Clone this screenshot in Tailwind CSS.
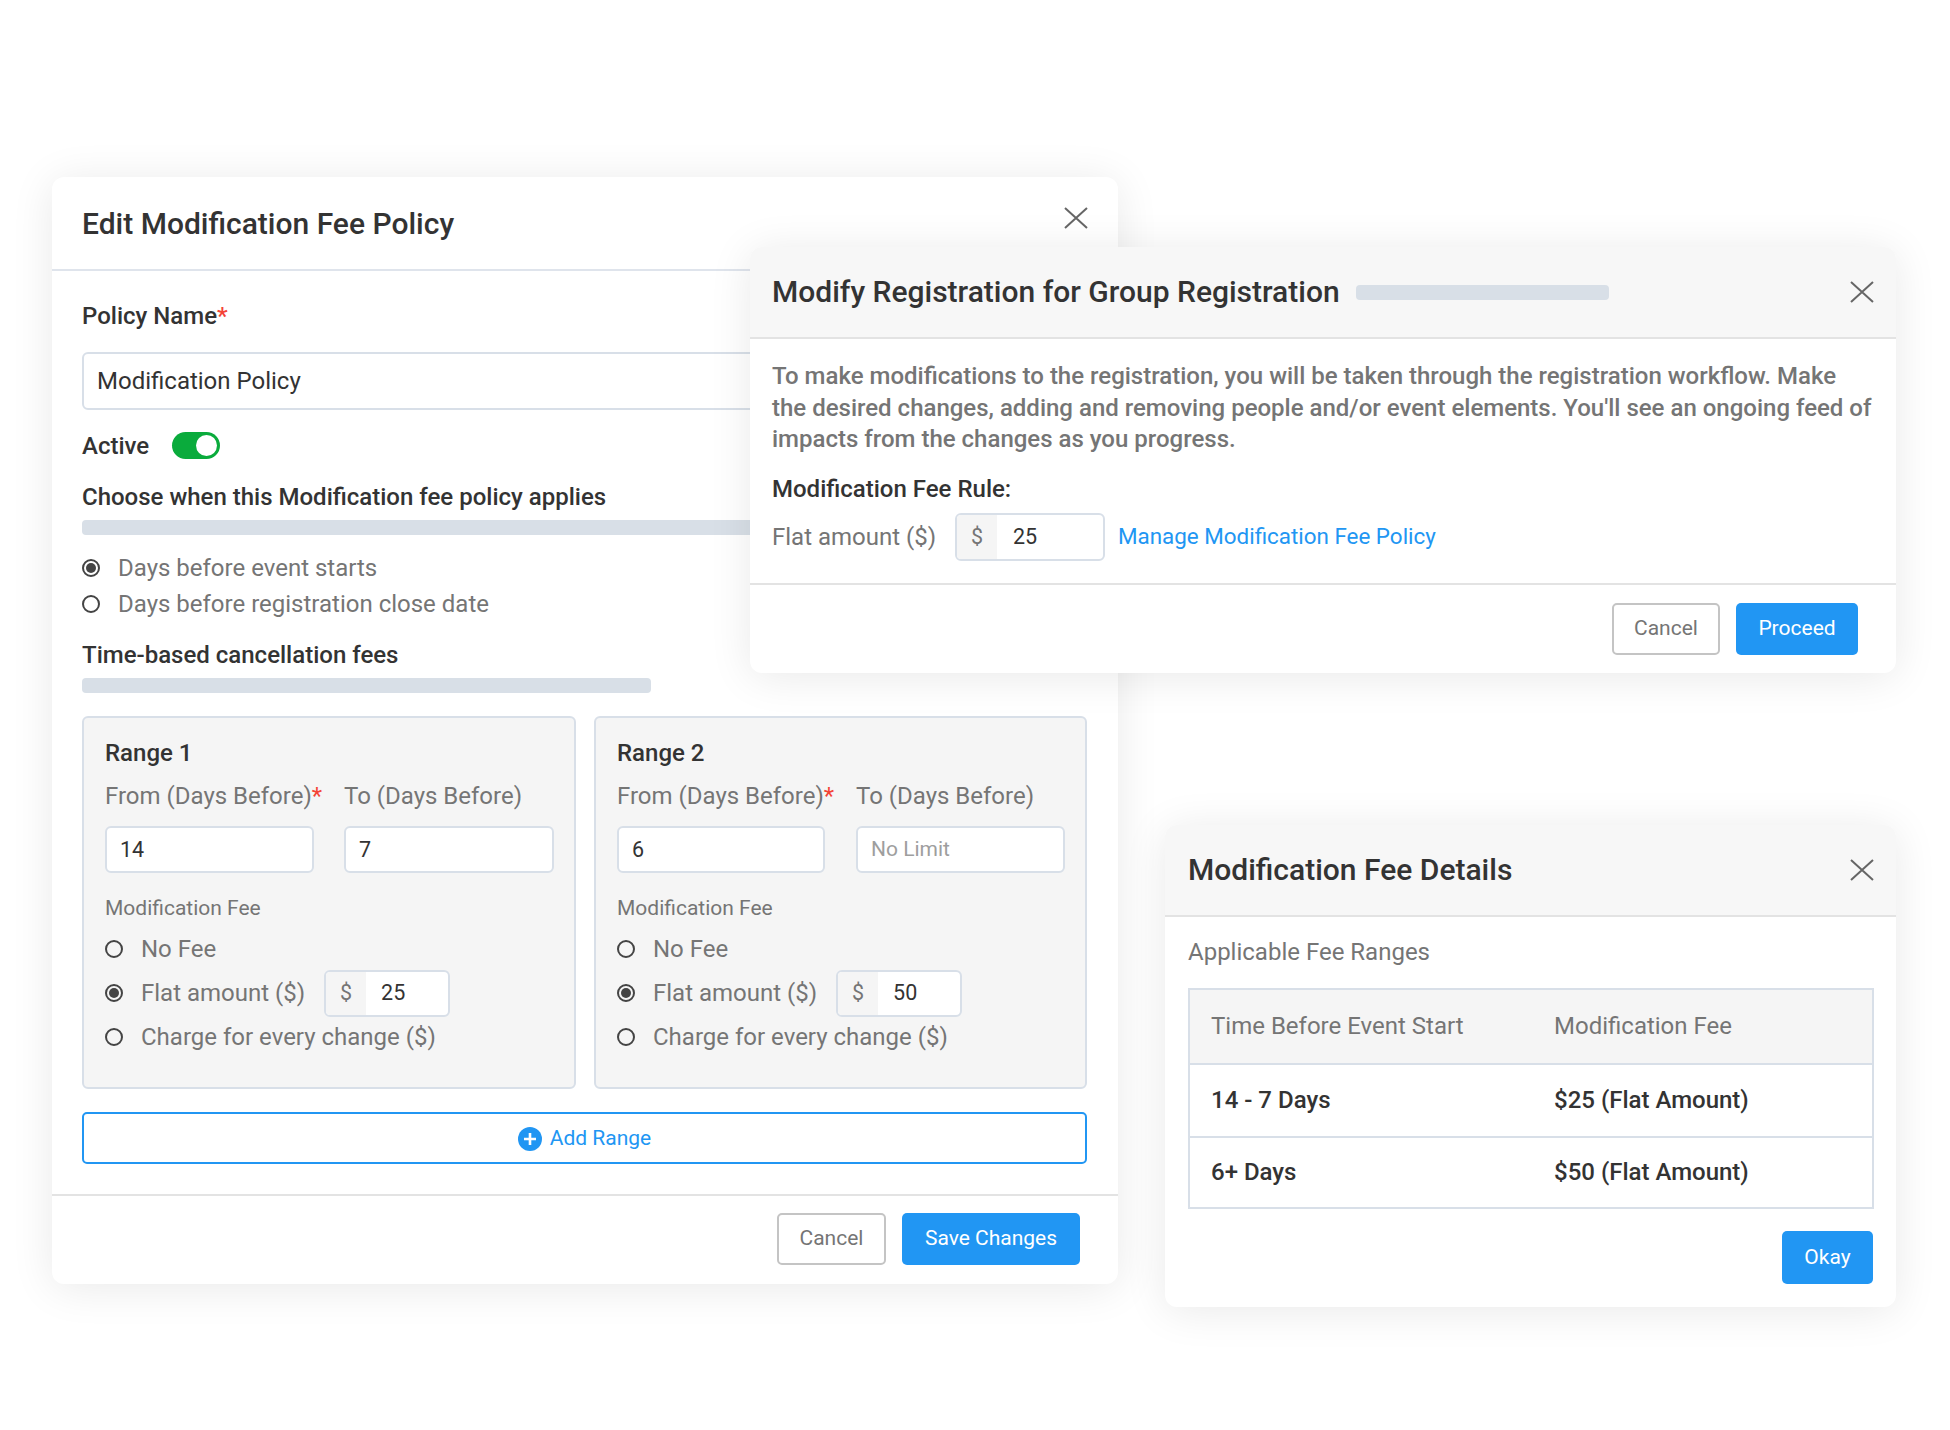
<!DOCTYPE html>
<html lang="en">
<head>
<meta charset="utf-8">
<title>Modification Fee Policy</title>
<script src="https://cdn.jsdelivr.net/npm/@tailwindcss/browser@4"></script>
</head>
<body class="bg-white">
<div class="relative w-[1950px] h-[1430px] overflow-hidden bg-white font-['Roboto',sans-serif] text-[24px] text-[#333]">

  <!-- Edit policy window -->
  <section class="absolute left-[52px] top-[177px] w-[1066px] h-[1107px] bg-white rounded-[12px] shadow-[0_4px_44px_rgba(0,0,0,0.09)] flex flex-col">
    <header class="h-[94px] shrink-0 border-b-2 border-[#dfe4ec] pl-[30px] pr-[29px] flex items-center justify-between">
      <h2 class="text-[30px] font-medium leading-none mt-[2px]">Edit Modification Fee Policy</h2>
      <svg class="w-[24px] h-[22px] -mt-[10px] mr-[1px]" viewBox="0 0 24 22" fill="none" stroke="#666" stroke-width="2"><path d="M1 1L23 21M23 1L1 21"/></svg>
    </header>
    <div class="pl-[30px] pr-[31px] flex flex-col">
      <div class="mt-[30px] h-[30px] leading-[30px] font-medium">Policy Name<span class="text-[#f44336]">*</span></div>
      <div class="mt-[21px] h-[58px] border-2 border-[#d8dfe8] rounded-[6px] pl-[13px] flex items-center">Modification Policy</div>
      <div class="mt-[22px] h-[27px] flex items-center gap-[23px]">
        <span class="font-medium">Active</span>
        <span class="w-[48px] h-[27px] rounded-full bg-[#0aab3c] flex items-center justify-end pr-[3px]"><span class="w-[21px] h-[21px] rounded-full bg-white"></span></span>
      </div>
      <div class="mt-[23px] h-[30px] leading-[30px] font-medium">Choose when this Modification fee policy applies</div>
      <div class="mt-[8px] h-[15px] w-[800px] rounded-[4px] bg-[#d8dfe7]"></div>
      <div class="mt-[18px] h-[30px] flex items-center gap-[18px] text-[#757575]">
        <span class="w-[18px] h-[18px] rounded-full border-2 border-[#444] flex items-center justify-center"><span class="w-[10px] h-[10px] rounded-full bg-[#444]"></span></span>
        Days before event starts
      </div>
      <div class="mt-[6px] h-[30px] flex items-center gap-[18px] text-[#757575]">
        <span class="w-[18px] h-[18px] rounded-full border-2 border-[#444]"></span>
        Days before registration close date
      </div>
      <div class="mt-[21px] h-[30px] leading-[30px] font-medium">Time-based cancellation fees</div>
      <div class="mt-[8px] h-[15px] w-[569px] rounded-[4px] bg-[#d8dfe7]"></div>

      <div class="mt-[23px] h-[373px] grid grid-cols-[494px_493px] gap-[18px]">
        <!-- Range 1 -->
        <div class="border-2 border-[#d8dfe8] rounded-[6px] bg-[#f5f5f5] pl-[21px] pr-[20px] pt-[20px]">
          <div class="h-[30px] leading-[30px] font-medium">Range 1</div>
          <div class="mt-[13px] grid grid-cols-[209px_209px] gap-x-[30px] text-[#757575]">
            <div class="h-[30px] leading-[30px] whitespace-nowrap">From (Days Before)<span class="text-[#f44336]">*</span></div>
            <div class="h-[30px] leading-[30px] whitespace-nowrap">To (Days Before)</div>
          </div>
          <div class="mt-[15px] grid grid-cols-[209px_210px] gap-x-[30px] text-[21.5px]">
            <div class="h-[47px] bg-white border-2 border-[#d8dfe8] rounded-[6px] pl-[13px] pt-[1px] flex items-center">14</div>
            <div class="h-[47px] bg-white border-2 border-[#d8dfe8] rounded-[6px] pl-[13px] pt-[1px] flex items-center">7</div>
          </div>
          <div class="mt-[22px] h-[26px] leading-[26px] text-[21px] text-[#757575]">Modification Fee</div>
          <div class="mt-[6px] flex flex-col text-[#757575]">
            <div class="h-[44px] flex items-center gap-[18px]"><span class="w-[18px] h-[18px] rounded-full border-2 border-[#444]"></span>No Fee</div>
            <div class="h-[44px] flex items-center gap-[18px]">
              <span class="w-[18px] h-[18px] rounded-full border-2 border-[#444] flex items-center justify-center"><span class="w-[10px] h-[10px] rounded-full bg-[#444]"></span></span>
              <span>Flat amount ($)</span>
              <span class="ml-[1px] w-[126px] h-[47px] border-2 border-[#d8dfe8] rounded-[6px] bg-white flex items-center overflow-hidden text-[21.5px]"><span class="w-[40px] h-full bg-[#f5f5f5] flex items-center justify-center">$</span><span class="pl-[15px] text-[#333]">25</span></span>
            </div>
            <div class="h-[44px] flex items-center gap-[18px]"><span class="w-[18px] h-[18px] rounded-full border-2 border-[#444]"></span>Charge for every change ($)</div>
          </div>
        </div>
        <!-- Range 2 -->
        <div class="border-2 border-[#d8dfe8] rounded-[6px] bg-[#f5f5f5] pl-[21px] pr-[20px] pt-[20px]">
          <div class="h-[30px] leading-[30px] font-medium">Range 2</div>
          <div class="mt-[13px] grid grid-cols-[208px_209px] gap-x-[31px] text-[#757575]">
            <div class="h-[30px] leading-[30px] whitespace-nowrap">From (Days Before)<span class="text-[#f44336]">*</span></div>
            <div class="h-[30px] leading-[30px] whitespace-nowrap">To (Days Before)</div>
          </div>
          <div class="mt-[15px] grid grid-cols-[208px_209px] gap-x-[31px] text-[21.5px]">
            <div class="h-[47px] bg-white border-2 border-[#d8dfe8] rounded-[6px] pl-[13px] pt-[1px] flex items-center">6</div>
            <div class="h-[47px] bg-white border-2 border-[#d8dfe8] rounded-[6px] pl-[13px] pt-[1px] flex items-center text-[21px] text-[#9e9e9e]">No Limit</div>
          </div>
          <div class="mt-[22px] h-[26px] leading-[26px] text-[21px] text-[#757575]">Modification Fee</div>
          <div class="mt-[6px] flex flex-col text-[#757575]">
            <div class="h-[44px] flex items-center gap-[18px]"><span class="w-[18px] h-[18px] rounded-full border-2 border-[#444]"></span>No Fee</div>
            <div class="h-[44px] flex items-center gap-[18px]">
              <span class="w-[18px] h-[18px] rounded-full border-2 border-[#444] flex items-center justify-center"><span class="w-[10px] h-[10px] rounded-full bg-[#444]"></span></span>
              <span>Flat amount ($)</span>
              <span class="ml-[1px] w-[126px] h-[47px] border-2 border-[#d8dfe8] rounded-[6px] bg-white flex items-center overflow-hidden text-[21.5px]"><span class="w-[40px] h-full bg-[#f5f5f5] flex items-center justify-center">$</span><span class="pl-[15px] text-[#333]">50</span></span>
            </div>
            <div class="h-[44px] flex items-center gap-[18px]"><span class="w-[18px] h-[18px] rounded-full border-2 border-[#444]"></span>Charge for every change ($)</div>
          </div>
        </div>
      </div>

      <div class="mt-[23px] h-[52px] border-2 border-[#2196f3] rounded-[5px] pt-[1px] flex items-center justify-center gap-[8px] text-[21px] text-[#2196f3]">
        <svg class="w-[24px] h-[24px]" viewBox="0 0 24 24"><circle cx="12" cy="12" r="12" fill="#2196f3"/><path d="M12 6v12M6 12h12" stroke="#fff" stroke-width="2.6"/></svg>
        Add Range
      </div>
    </div>
    <footer class="mt-[30px] flex-1 border-t-2 border-[#e3e3e3] pr-[38px] pb-[2px] flex items-center justify-end gap-[16px] text-[21px]">
      <div class="w-[109px] h-[52px] rounded-[5px] border-2 border-[#c4c4c4] text-[#757575] flex items-center justify-center">Cancel</div>
      <div class="w-[178px] h-[52px] rounded-[5px] bg-[#2196f3] text-white flex items-center justify-center">Save Changes</div>
    </footer>
  </section>

  <!-- Modify registration window -->
  <section class="absolute left-[750px] top-[247px] w-[1146px] h-[426px] bg-white rounded-[12px] shadow-[0_4px_44px_rgba(0,0,0,0.09)] flex flex-col overflow-hidden">
    <header class="h-[92px] shrink-0 bg-[#f7f7f7] border-b-2 border-[#e3e3e3] pl-[22px] pr-[22px] flex items-center">
      <h2 class="text-[30px] font-medium leading-none">Modify Registration for Group Registration</h2>
      <span class="ml-[16px] w-[253px] h-[15px] rounded-[4px] bg-[#d8dfe7]"></span>
      <svg class="ml-auto w-[24px] h-[22px]" viewBox="0 0 24 22" fill="none" stroke="#666" stroke-width="2"><path d="M1 1L23 21M23 1L1 21"/></svg>
    </header>
    <div class="h-[244px] shrink-0 pl-[22px] pr-[22px] pt-[22px] flex flex-col">
      <p class="text-[#757575] text-[24px] font-medium leading-[31.6px]">To make modifications to the registration, you will be taken through the registration workflow. Make the desired changes, adding and removing people and/or event elements. You'll see an ongoing feed of impacts from the changes as you progress.</p>
      <div class="mt-[18px] h-[30px] leading-[30px] font-medium">Modification Fee Rule:</div>
      <div class="mt-[9px] h-[48px] flex items-center">
        <span class="w-[183px] text-[#757575]">Flat amount ($)</span>
        <span class="w-[150px] h-[48px] border-2 border-[#d8dfe8] rounded-[6px] bg-white flex items-center overflow-hidden text-[21.5px]"><span class="w-[40px] h-full bg-[#f5f5f5] text-[#757575] flex items-center justify-center">$</span><span class="pl-[16px]">25</span></span>
        <span class="ml-[13px] text-[22.4px] text-[#2196f3]">Manage Modification Fee Policy</span>
      </div>
    </div>
    <footer class="flex-1 border-t-2 border-[#e3e3e3] pr-[38px] pb-[1px] flex items-center justify-end gap-[16px] text-[21px]">
      <div class="w-[108px] h-[52px] rounded-[5px] border-2 border-[#c4c4c4] text-[#757575] flex items-center justify-center">Cancel</div>
      <div class="w-[122px] h-[52px] rounded-[5px] bg-[#2196f3] text-white flex items-center justify-center">Proceed</div>
    </footer>
  </section>

  <!-- Fee details window -->
  <section class="absolute left-[1165px] top-[825px] w-[731px] h-[482px] bg-white rounded-[12px] shadow-[0_4px_44px_rgba(0,0,0,0.09)] flex flex-col overflow-hidden">
    <header class="h-[92px] shrink-0 bg-[#f7f7f7] border-b-2 border-[#e3e3e3] pl-[23px] pr-[22px] flex items-center justify-between">
      <h2 class="text-[30px] font-medium leading-none">Modification Fee Details</h2>
      <svg class="w-[24px] h-[22px]" viewBox="0 0 24 22" fill="none" stroke="#666" stroke-width="2"><path d="M1 1L23 21M23 1L1 21"/></svg>
    </header>
    <div class="pl-[23px] pr-[22px] flex flex-col">
      <div class="mt-[20px] h-[30px] leading-[30px] text-[#757575]">Applicable Fee Ranges</div>
      <div class="mt-[21px] h-[221px] border-2 border-[#d8dfe8] flex flex-col">
        <div class="h-[75px] bg-[#f5f5f5] border-b-2 border-[#d8dfe8] grid grid-cols-[343px_1fr] pl-[21px] pb-[1px] items-center text-[#757575]"><span>Time Before Event Start</span><span>Modification Fee</span></div>
        <div class="h-[73px] border-b-2 border-[#d8dfe8] grid grid-cols-[343px_1fr] pl-[21px] pb-[2px] items-center font-medium"><span>14 - 7 Days</span><span>$25 (Flat Amount)</span></div>
        <div class="flex-1 grid grid-cols-[343px_1fr] pl-[21px] pb-[1px] items-center font-medium"><span>6+ Days</span><span>$50 (Flat Amount)</span></div>
      </div>
      <div class="mt-[22px] self-end mr-[1px] w-[91px] h-[53px] rounded-[5px] bg-[#2196f3] text-white text-[21px] flex items-center justify-center">Okay</div>
    </div>
  </section>
</div>
</body>
</html>
